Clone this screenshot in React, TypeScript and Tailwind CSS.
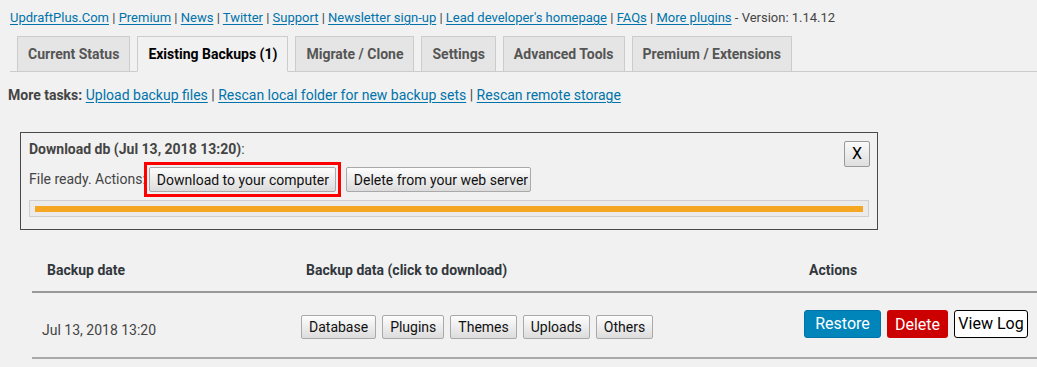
import React from "react";

const links = [
  "UpdraftPlus.Com",
  "Premium",
  "News",
  "Twitter",
  "Support",
  "Newsletter sign-up",
  "Lead developer's homepage",
  "FAQs",
  "More plugins",
];

const tabs = [
  { label: "Current Status", active: false },
  { label: "Existing Backups (1)", active: true },
  { label: "Migrate / Clone", active: false },
  { label: "Settings", active: false },
  { label: "Advanced Tools", active: false },
  { label: "Premium / Extensions", active: false },
];

const greyBtn =
  "h-[24px] px-[7px] border border-[#a9a9a9] rounded-[2px] bg-linear-to-b from-[#fdfdfd] to-[#dcdcdc] text-[14px] leading-[22px] text-[#111] whitespace-nowrap";

export default function App() {
  return (
    <div className="min-h-[367px] bg-[#f1f1f1] font-['Roboto','Liberation_Sans',sans-serif] text-[#444] pl-[10px] overflow-hidden">
      {/* top links */}
      <div className="pt-[8px] text-[13px] leading-[20px] whitespace-nowrap">
        {links.map((l, i) => (
          <React.Fragment key={l}>
            <a className="text-[#0073aa] underline underline-offset-2">{l}</a>
            {i < links.length - 1 ? " | " : ""}
          </React.Fragment>
        ))}
        {" - Version: 1.14.12"}
      </div>

      {/* tabs */}
      <div className="mt-[8px] flex items-end border-b border-[#ccc]">
        {tabs.map((t) => (
          <div
            key={t.label}
            className={
              "ml-[7px] -mb-px h-[36px] px-[10px] border text-[14px] leading-[34px] font-bold whitespace-nowrap " +
              (t.active
                ? "bg-[#f1f1f1] border-[#ccc] border-b-[#f1f1f1] text-black"
                : "bg-[#e5e5e5] border-[#ccc] text-[#555]")
            }
          >
            {t.label}
          </div>
        ))}
      </div>

      {/* more tasks */}
      <div className="mt-[13px] text-[14px] leading-[20px] -ml-[2px] whitespace-nowrap">
        <span className="font-bold">More tasks:</span>{" "}
        <a className="text-[#0073aa] underline underline-offset-2">Upload backup files</a>
        {" | "}
        <a className="text-[#0073aa] underline underline-offset-2">Rescan local folder for new backup sets</a>
        {" | "}
        <a className="text-[#0073aa] underline underline-offset-2">Rescan remote storage</a>
      </div>

      {/* download box */}
      <div className="mt-[27px] ml-[10px] w-[858px] border border-[#4a4a4a] pl-[8px] pr-[7px] pt-[8px] pb-[12px]">
        <button className="float-right w-[26px] h-[26px] border border-[#999] rounded-[2px] bg-linear-to-b from-[#fafafa] to-[#dedede] text-[16px] leading-[24px] text-black">
          X
        </button>
        <div className="text-[14px] leading-[16px]">
          <span className="font-bold">Download db (Jul 13, 2018 13:20)</span>:
        </div>
        <div className="mt-[10px] flex items-center text-[14px] h-[25px]">
          <span className="whitespace-nowrap">File ready. Actions:</span>
          <span className="relative ml-[3px] flex">
            <button className={greyBtn + " h-[25px] w-[187px]"}>Download to your computer</button>
            <span className="pointer-events-none absolute -inset-[5px] border-[3px] border-[#ff0000]" />
          </span>
          <button className={greyBtn + " ml-[10px] h-[25px] w-[185px] px-0"}>Delete from your web server</button>
        </div>
        <div className="mt-[8px] h-[17px] w-[840px] border border-[#cfcfcf] bg-[#ebebeb] px-[5px] pt-[5px]">
          <div className="h-[6px] bg-[#f5a623]" />
        </div>
      </div>

      {/* table */}
      <div className="mt-[20px] ml-[22px] w-[1040px] text-[14px]">
        <div className="flex h-[43px] items-center border-b-2 border-[#999] font-bold text-[#32373c]">
          <div className="w-[269px] pl-[15px]">Backup date</div>
          <div className="w-[503px] pl-[5px]">Backup data (click to download)</div>
          <div className="pl-[5px]">Actions</div>
        </div>
        <div className="flex h-[66px] items-center border-b-2 border-[#aaa]">
          <div className="w-[269px] pl-[10px] mt-[10px] text-[#444]">Jul 13, 2018 13:20</div>
          <div className="w-[503px] flex gap-[6px] mt-[4px]">
            {["Database", "Plugins", "Themes", "Uploads", "Others"].map((b) => (
              <button key={b} className={greyBtn}>
                {b}
              </button>
            ))}
          </div>
          <div className="flex gap-[6px] -mt-[2px]">
            <button className="h-[28px] w-[77px] rounded-[3px] bg-[#0085ba] border border-[#0073aa] text-white text-[16px] leading-[26px]">
              Restore
            </button>
            <button className="h-[28px] w-[61px] rounded-[3px] bg-[#c00] text-white text-[16px] leading-[30px]">
              Delete
            </button>
            <button className="h-[28px] w-[74px] rounded-[3px] bg-white border border-black text-black text-[16px] leading-[26px]">
              View Log
            </button>
          </div>
        </div>
      </div>
    </div>
  );
}
